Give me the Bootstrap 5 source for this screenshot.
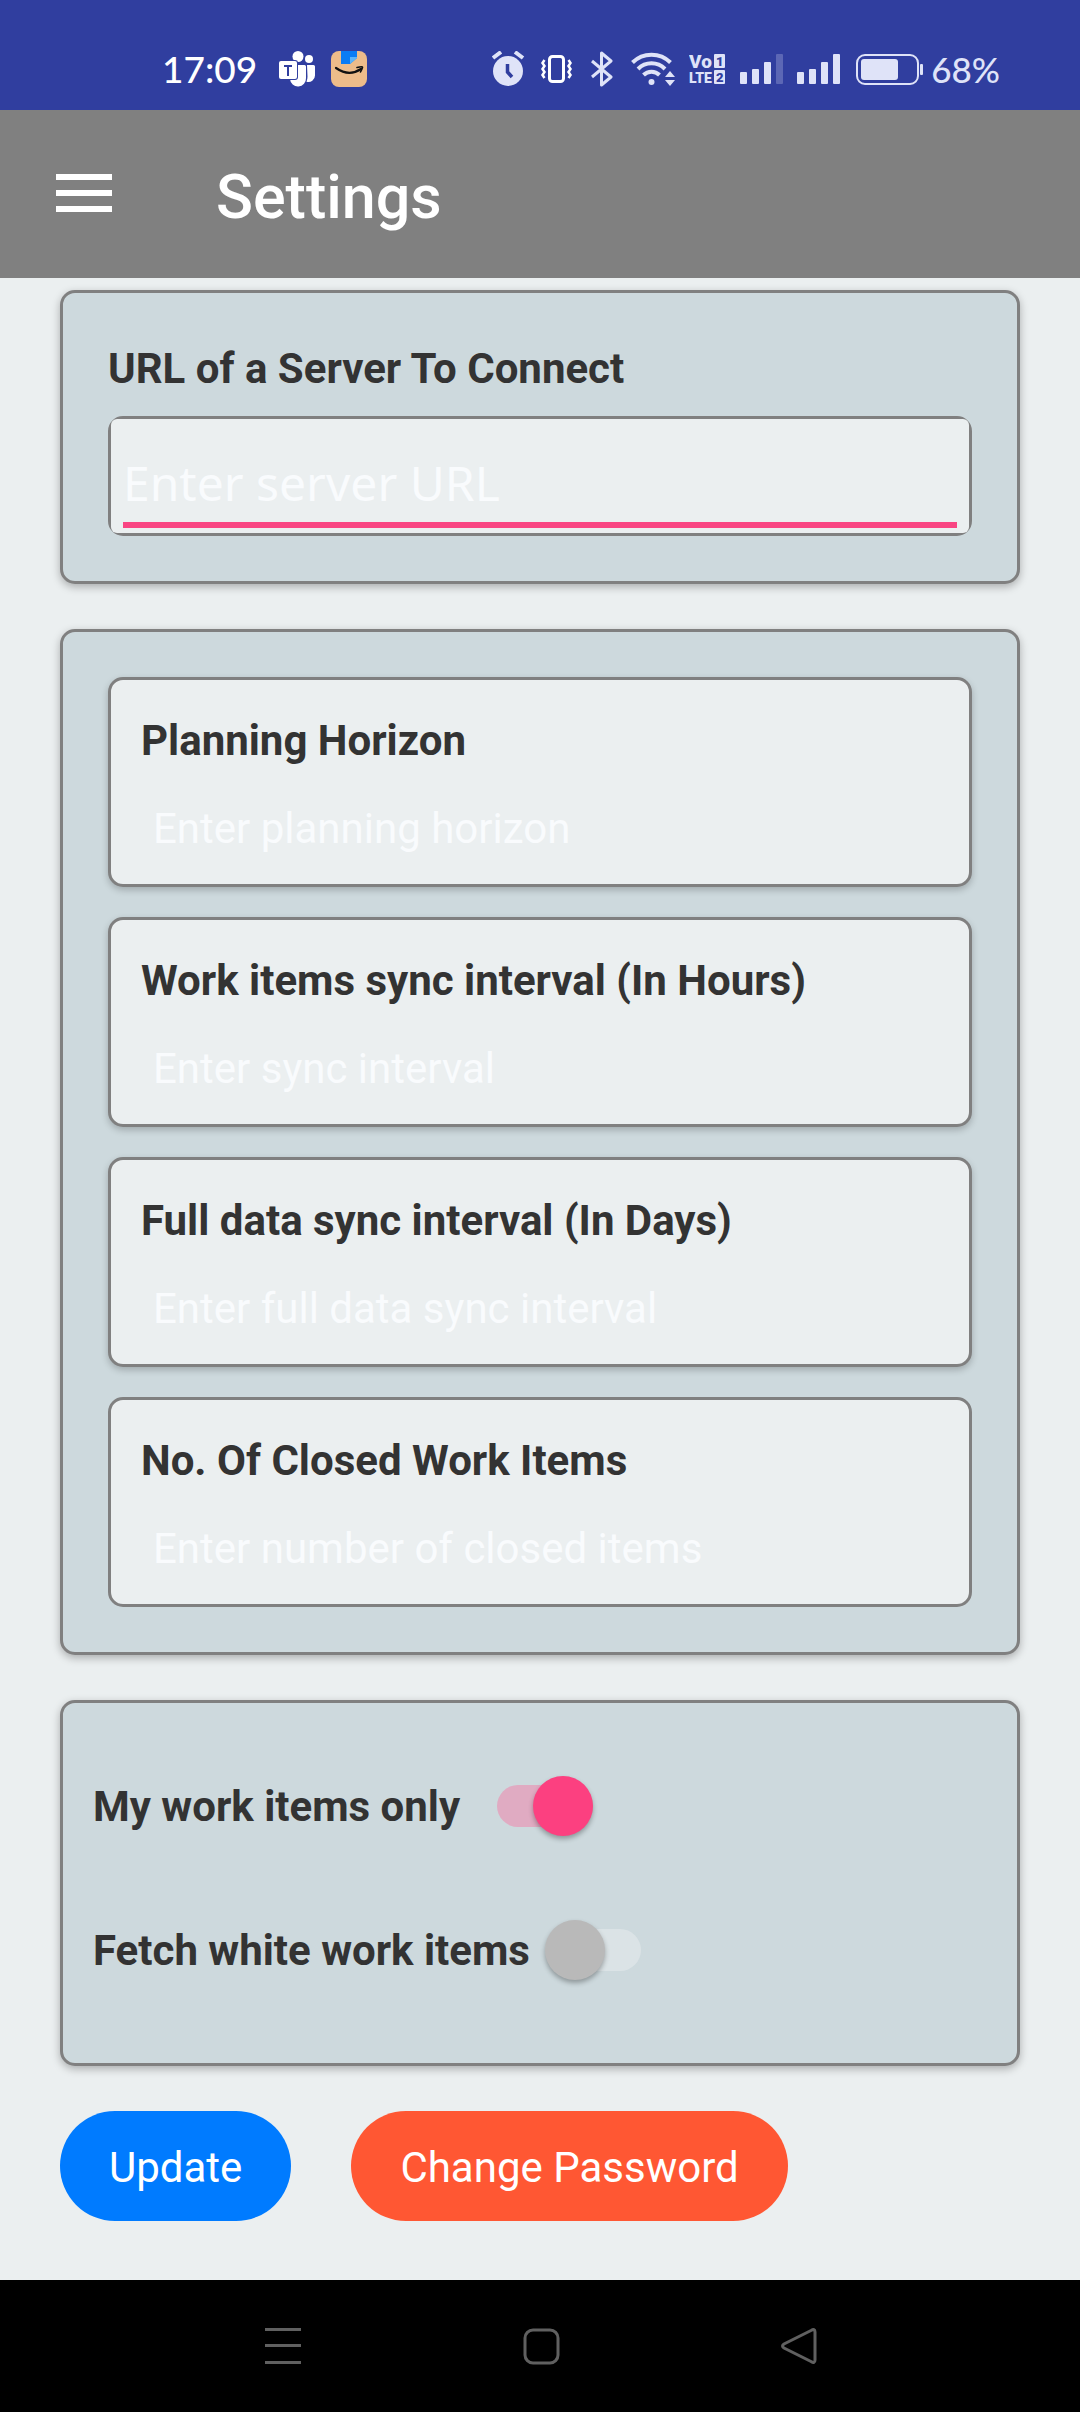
<!DOCTYPE html>
<html lang="en">
<head>
<meta charset="utf-8">
<meta name="viewport" content="width=device-width, initial-scale=1">
<title>Settings</title>
<link href="https://cdn.jsdelivr.net/npm/bootstrap@5.3.0/dist/css/bootstrap.min.css" rel="stylesheet">
<style>
  body { background: #ebeff0; color: #333; font-family: Roboto, "Liberation Sans", sans-serif; font-size: 42px; line-height: 60px; }
  .status-bar { background: #303e9f; height: 110px; padding: 28px 80px 0 162px; font-family: Lato, Roboto, sans-serif; font-size: 37px; font-weight: 500; line-height: 84px; color: #fff; }
  .status-bar svg { display: block; flex: none; }
  .notif-icons { gap: 16px; margin-left: 22px; }
  .sys-icons { gap: 14px; color: #dfe3f8; font-size: 35px; }
  .battery-level { gap: 8px; }
  .app-bar { background: #808080; height: 168px; padding: 0 56px; gap: 104px; }
  .app-bar h1 { font-size: 61px; font-weight: 500; line-height: 72px; padding-top: 6px; }
  .menu-btn svg { display: block; }
  .settings-form { padding: 12px 60px 59px; }
  .panel { background: #cdd9dd; border: 3px solid #808080; border-radius: 15px; padding: 45px; margin-bottom: 45px; box-shadow: 0 3px 9px rgba(0,0,0,.28); }
  .panel label { font-weight: 700; line-height: 62px; display: block; }
  .url-box { border: 3px solid #808080; border-radius: 15px; margin-top: 16px; }
  .url-inner { background: #ebeff0; border-radius: 6px; padding: 23px 12px 5px; }
  .panel input[type=text] { display: block; width: 100%; background: transparent; border: 0; border-radius: 0; outline: 0; color: #333; }
  .panel input::placeholder { color: #f9fbfd; opacity: 1; }
  .url-inner input[type=text] { height: 86px; padding: 0; border-bottom: 6px solid #f94583; font-family: "Noto Sans", "Open Sans", sans-serif; font-size: 48px; }
  .field-list { gap: 30px; }
  .field-box { background: #ebeff0; border: 3px solid #808080; border-radius: 15px; padding: 30px 30px 0; box-shadow: 0 3px 7px rgba(0,0,0,.22); }
  .field-box:last-child { box-shadow: none; }
  .field-box input[type=text] { height: 112px; padding: 0 12px; }
  .toggles { padding: 31px 30px 41px; }
  .toggle-row { height: 144px; }
  .toggle-row label { padding-top: 2px; }
  .toggle-row input { appearance: none; display: grid; align-items: center; width: 96px; height: 60px; margin-left: 15px; }
  .toggle-row input:checked { margin-left: 37px; }
  .toggle-row input::before { content: ""; grid-area: 1/1; height: 42px; border-radius: 21px; background: #dbe3e6; }
  .toggle-row input::after { content: ""; grid-area: 1/1; width: 60px; height: 60px; border-radius: 50%; background: #b9b9b9; box-shadow: 0 3px 5px rgba(0,0,0,.3); }
  .toggle-row input:checked::before { background: #e0abc2; }
  .toggle-row input:checked::after { background: #fc4080; justify-self: end; }
  .actions { gap: 60px; }
  .action-btn { height: 110px; padding: 2px 49px 0; font-size: 42px; border: 0; color: #fff; }
  .btn-update { background: #007bff; }
  .btn-password { background: #ff5733; }
  .nav-bar { background: #000; height: 132px; gap: 216px; padding-left: 2px; }
  .nav-bar svg { display: block; }
</style>
<script src="https://cdn.jsdelivr.net/npm/bootstrap@5.3.0/dist/js/bootstrap.bundle.min.js"></script>
</head>
<body>
<div class="status-bar d-flex align-items-center justify-content-between">
  <div class="d-flex align-items-center">
    <span>17:09</span>
    <div class="notif-icons d-flex align-items-center">
      <svg width="36" height="36" viewBox="0 0 36 36" fill="#fff" aria-label="Teams">
        <circle cx="19" cy="5.500" r="5.500"/><circle cx="30" cy="8" r="4"/>
        <path d="M28 14h6.500a1.500 1.500 0 0 1 1.500 1.500v9a6.500 6.500 0 0 1-8.500 6.200q1-2.500 1-5z"/>
        <path d="M12 14h13.500a1.500 1.500 0 0 1 1.500 1.500V27a8 8 0 0 1-16 1z"/>
        <rect x="-1" y="9" width="20" height="20" rx="3" fill="#303e9f"/>
        <rect x="0" y="10" width="18" height="18" rx="2"/>
        <path d="M5 14h8v2h-3v9H8v-9H5z" fill="#303e9f"/>
      </svg>
      <svg width="36" height="36" viewBox="0 0 36 36" aria-label="Shopping">
        <rect width="36" height="36" rx="8" fill="#edbc8a"/>
        <path d="M10 0h16v7l-7 6h-9z" fill="#0a7cf5"/><path d="M26 6v1l-7 6V6z" fill="#5bb4fb"/>
        <path d="M5 17q13 9 25 1" fill="none" stroke="#111" stroke-width="2.200" stroke-linecap="round"/>
        <path d="M26 16.500q6-1.500 5.500 0t-2 4.500" fill="none" stroke="#111" stroke-width="1.600" stroke-linecap="round"/>
      </svg>
    </div>
  </div>
  <div class="sys-icons d-flex align-items-center">
    <svg width="34" height="36" viewBox="0 0 34 36" fill="currentColor" aria-label="Alarm">
      <circle cx="16" cy="20" r="15"/><path d="M1 7l8-6M31 7l-8-6" stroke="currentColor" stroke-width="4"/>
      <path d="M15.500 13v8l4.500 5" fill="none" stroke="#303e9f" stroke-width="3.500"/>
    </svg>
    <svg width="35" height="36" viewBox="0 0 35 36" fill="none" stroke="#fff" aria-label="Vibrate">
      <rect x="9.500" y="5.500" width="14" height="25" rx="3" stroke-width="3"/>
      <path d="M4.500 9l-2 3 2 3-2 3 2 3-2 3 2 3M28.500 9l2 3-2 3 2 3-2 3 2 3-2 3" stroke-width="2.500"/>
    </svg>
    <svg width="28" height="36" viewBox="0 0 28 36" fill="none" stroke="currentColor" stroke-width="3" stroke-linejoin="round" aria-label="Bluetooth">
      <path d="M3 10l19 16-9.500 8V2L22 10 3 26"/>
    </svg>
    <svg width="44" height="36" viewBox="0 0 44 36" fill="none" stroke="currentColor" stroke-width="4" aria-label="Wi-Fi">
      <path d="M1.500 11.500a27 27 0 0 1 38 0M7 18a19 19 0 0 1 27 0M12.500 24a11.500 11.500 0 0 1 16 0"/>
      <circle cx="20.500" cy="31" r="3" fill="currentColor" stroke="none"/>
      <path d="M34 26l5-6 5 6zM34 29h10l-5 6z" fill="currentColor" stroke="none"/>
    </svg>
    <svg width="37" height="36" viewBox="0 0 37 36" fill="currentColor" font-family="Roboto, sans-serif" font-weight="900" aria-label="VoLTE">
      <text x="0" y="17" font-size="19">Vo</text><text x="0" y="32" font-size="14">LTE</text>
      <rect x="25" y="3" width="11" height="14" rx="1"/><rect x="25" y="19" width="11" height="14" rx="1"/>
      <g fill="#303e9f" font-size="13"><text x="27" y="15">1</text><text x="27" y="31">2</text></g>
    </svg>
    <svg width="43" height="36" viewBox="0 0 43 36" fill="currentColor" aria-label="Signal 1">
      <rect y="21" width="7" height="12" rx="1"/><rect x="12" y="18" width="7" height="15" rx="1"/><rect x="24" y="11" width="7" height="22" rx="1"/><rect x="36" y="3" width="7" height="30" rx="1" opacity=".25"/>
    </svg>
    <svg width="45" height="36" viewBox="0 0 45 36" fill="currentColor" aria-label="Signal 2">
      <rect y="21" width="7" height="12" rx="1"/><rect x="12" y="18" width="7" height="15" rx="1"/><rect x="24" y="11" width="7" height="22" rx="1"/><rect x="36" y="3" width="7" height="30" rx="1"/>
    </svg>
    <div class="battery-level d-flex align-items-center">
      <svg width="67" height="36" viewBox="0 0 67 36" fill="currentColor" aria-label="Battery">
        <rect x="1" y="4" width="61" height="29" rx="8" fill="none" stroke="currentColor" stroke-width="2"/>
        <rect x="5" y="8" width="37" height="21" rx="3"/><rect x="64" y="13" width="3" height="11" rx="1"/>
      </svg>
      <span>68%</span>
    </div>
  </div>
</div>

<header class="app-bar d-flex align-items-center">
  <button type="button" class="menu-btn btn p-0 border-0" aria-label="Open menu">
    <svg width="56" height="40" viewBox="0 0 56 40" fill="#fff"><path d="M0 0h56v6H0zM0 16h56v6H0zM0 32h56v6H0z"/></svg>
  </button>
  <h1 class="m-0 text-white">Settings</h1>
</header>

<main>
  <form class="settings-form">
    <section class="panel">
      <label for="url">URL of a Server To Connect</label>
      <div class="url-box"><div class="url-inner"><input type="text" id="url" placeholder="Enter server URL"></div></div>
    </section>

    <section class="panel field-list d-flex flex-column">
      <div class="field-box"><label for="horizon">Planning Horizon</label><input type="text" id="horizon" placeholder="Enter planning horizon"></div>
      <div class="field-box"><label for="sync">Work items sync interval (In Hours)</label><input type="text" id="sync" placeholder="Enter sync interval"></div>
      <div class="field-box"><label for="full">Full data sync interval (In Days)</label><input type="text" id="full" placeholder="Enter full data sync interval"></div>
      <div class="field-box"><label for="closed">No. Of Closed Work Items</label><input type="text" id="closed" placeholder="Enter number of closed items"></div>
    </section>

    <section class="panel toggles">
      <div class="toggle-row d-flex align-items-center"><label for="mine">My work items only</label><input type="checkbox" role="switch" id="mine" checked></div>
      <div class="toggle-row d-flex align-items-center"><label for="white">Fetch white work items</label><input type="checkbox" role="switch" id="white"></div>
    </section>

    <div class="actions d-flex">
      <button type="button" class="btn rounded-pill action-btn btn-update">Update</button>
      <button type="button" class="btn rounded-pill action-btn btn-password">Change Password</button>
    </div>
  </form>
</main>

<nav class="nav-bar d-flex align-items-center justify-content-center" aria-label="System">
  <button type="button" class="btn p-0 border-0" aria-label="Recent apps">
    <svg width="42" height="42" viewBox="0 0 42 42" fill="#606060"><path d="M3 3h36v3H3zM3 19h36v3H3zM3 36h36v3H3z"/></svg>
  </button>
  <button type="button" class="btn p-0 border-0" aria-label="Home">
    <svg width="42" height="42" viewBox="0 0 42 42" fill="none" stroke="#606060" stroke-width="3"><rect x="5" y="5" width="33" height="33" rx="8"/></svg>
  </button>
  <button type="button" class="btn p-0 border-0" aria-label="Back">
    <svg width="42" height="42" viewBox="0 0 42 42" fill="none" stroke="#606060" stroke-width="3"><path d="M33 5.500Q37 3 37 7v28q0 4-4 1.500L6 23q-3-2 0-4z"/></svg>
  </button>
</nav>
</body>
</html>
